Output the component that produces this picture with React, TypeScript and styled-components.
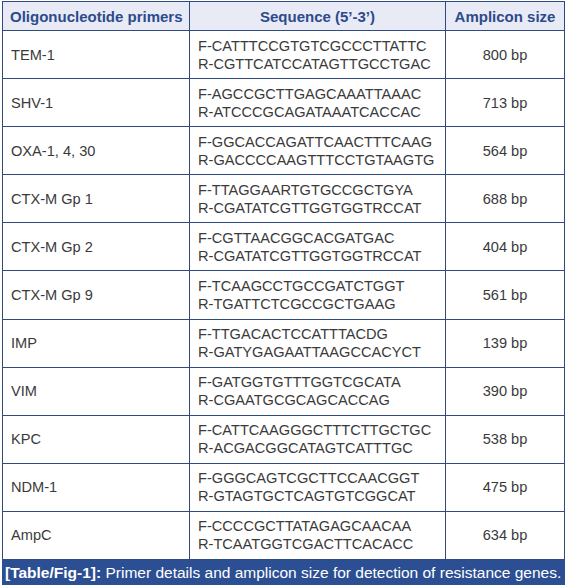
import React from 'react';
import styled, { createGlobalStyle } from 'styled-components';

const GlobalStyle = createGlobalStyle`
  html, body {
    margin: 0;
    padding: 0;
    background: #ffffff;
  }
  body {
    font-family: 'Liberation Sans', Arial, sans-serif;
  }
`

type Primer = { name: string; fwd: string; rev: string; size: string };

const primers: Primer[] = [
  { name: 'TEM-1', fwd: 'F-CATTTCCGTGTCGCCCTTATTC', rev: 'R-CGTTCATCCATAGTTGCCTGAC', size: '800 bp' },
  { name: 'SHV-1', fwd: 'F-AGCCGCTTGAGCAAATTAAAC', rev: 'R-ATCCCGCAGATAAATCACCAC', size: '713 bp' },
  { name: 'OXA-1, 4, 30', fwd: 'F-GGCACCAGATTCAACTTTCAAG', rev: 'R-GACCCCAAGTTTCCTGTAAGTG', size: '564 bp' },
  { name: 'CTX-M Gp 1', fwd: 'F-TTAGGAARTGTGCCGCTGYA', rev: 'R-CGATATCGTTGGTGGTRCCAT', size: '688 bp' },
  { name: 'CTX-M Gp 2', fwd: 'F-CGTTAACGGCACGATGAC', rev: 'R-CGATATCGTTGGTGGTRCCAT', size: '404 bp' },
  { name: 'CTX-M Gp 9', fwd: 'F-TCAAGCCTGCCGATCTGGT', rev: 'R-TGATTCTCGCCGCTGAAG', size: '561 bp' },
  { name: 'IMP', fwd: 'F-TTGACACTCCATTTACDG', rev: 'R-GATYGAGAATTAAGCCACYCT', size: '139 bp' },
  { name: 'VIM', fwd: 'F-GATGGTGTTTGGTCGCATA', rev: 'R-CGAATGCGCAGCACCAG', size: '390 bp' },
  { name: 'KPC', fwd: 'F-CATTCAAGGGCTTTCTTGCTGC', rev: 'R-ACGACGGCATAGTCATTTGC', size: '538 bp' },
  { name: 'NDM-1', fwd: 'F-GGGCAGTCGCTTCCAACGGT', rev: 'R-GTAGTGCTCAGTGTCGGCAT', size: '475 bp' },
  { name: 'AmpC', fwd: 'F-CCCCGCTTATAGAGCAACAA', rev: 'R-TCAATGGTCGACTTCACACC', size: '634 bp' },
];

export default function App() {
  return (
    <>
      <GlobalStyle />
      <Figure>
        <Table>
          <colgroup>
            <col style={{ width: 187 }} />
            <col style={{ width: 256 }} />
            <col />
          </colgroup>
          <thead>
            <tr>
              <HeadCell>Oligonucleotide primers</HeadCell>
              <HeadCell align="center">Sequence (5’-3’)</HeadCell>
              <HeadCell align="center">Amplicon size</HeadCell>
            </tr>
          </thead>
          <tbody>
            {primers.map((p) => (
              <Row key={p.name}>
                <Cell>{p.name}</Cell>
                <Cell>
                  <SeqLine>{p.fwd}</SeqLine>
                  <SeqLine>{p.rev}</SeqLine>
                </Cell>
                <Cell align="center">{p.size}</Cell>
              </Row>
            ))}
          </tbody>
        </Table>
        <Caption>
          <strong>[Table/Fig-1]:</strong> Primer details and amplicon size for detection of resistance genes.
        </Caption>
      </Figure>
    </>
  );
}

const Figure = styled.div`
  width: 563px;
  margin: 1px 0 0 2px;
  font-family: 'Liberation Sans', Arial, sans-serif;
`

const Table = styled.table`
  width: 563px;
  border-collapse: collapse;
  table-layout: fixed;
  border: 1px solid #2f4a7c;
`

const HeadCell = styled.th<{ align?: string }>`
  height: 28px;
  padding: 0 7px;
  background: #e8eaf5;
  border: 1px solid #2f4a7c;
  color: #2d4b8c;
  font-size: 15px;
  font-weight: 700;
  text-align: ${(p) => p.align || 'left'};
  white-space: nowrap;
`

const Row = styled.tr`
  height: 48.1px;
`

const Cell = styled.td<{ align?: string }>`
  padding: 0 8px;
  border: 1px solid #2f4a7c;
  color: #3a3a3a;
  font-size: 14.6px;
  text-align: ${(p) => p.align || 'left'};
  vertical-align: middle;
`

const SeqLine = styled.div`
  line-height: 18px;
  white-space: nowrap;
`

const Caption = styled.div`
  height: 25px;
  padding: 0 3px;
  background: #2c4f93;
  color: #ffffff;
  font-size: 15.5px;
  line-height: 25px;
  white-space: nowrap;

  strong {
    font-weight: 700;
  }
`
